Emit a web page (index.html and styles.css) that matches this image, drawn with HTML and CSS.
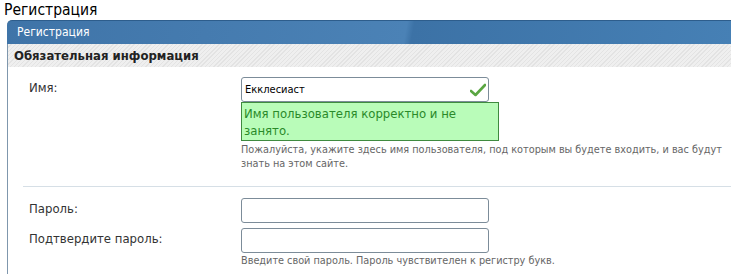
FILE: index.html
```html
<html>
<head>
<meta charset="utf-8">
<link rel="stylesheet" href="styles.css">
<title>Регистрация</title>
</head>
<body>
    <h2 class="pageTitle">Регистрация</h2>
    <div class="block">
        <div class="blockHead">Регистрация</div>
        <div class="subHead">Обязательная информация</div>
        <div class="blockBody">
            <div class="row">
                <div class="label">Имя:</div>
                <div class="field">
                    <div class="inputBox">
                        <span class="value">Екклесиаст</span>
                        <svg class="check" width="16" height="14" viewBox="0 0 16 14">
                            <path d="M1 8 L5.5 12 L15 2" fill="none" stroke="#5aa642" stroke-width="2.6" stroke-linecap="round" stroke-linejoin="round"/>
                        </svg>
                    </div>
                    <div class="okBox">Имя пользователя корректно и не занято.</div>
                    <p class="hint">Пожалуйста, укажите здесь имя пользователя, под которым вы будете входить, и вас будут знать на этом сайте.</p>
                </div>
            </div>
            <div class="divider"></div>
            <div class="row rowTight">
                <div class="label">Пароль:</div>
                <div class="field">
                    <div class="inputBox"></div>
                </div>
            </div>
            <div class="row">
                <div class="label">Подтвердите пароль:</div>
                <div class="field">
                    <div class="inputBox"></div>
                    <p class="hint hintLast">Введите свой пароль. Пароль чувствителен к регистру букв.</p>
                </div>
            </div>
        </div>
    </div>
</body>
</html>
```

FILE: styles.css
```css
body {margin: 0;
      background: white;
      font-family: "DejaVu Sans Condensed", "DejaVu Sans", sans-serif;
      font-size: 11px;
      color: #333}
.pageTitle {margin: 0;
            padding: 2px 0 0 4px;
            height: 18px;
            font-size: 15.5px;
            font-weight: normal;
            color: black;
            line-height: 17px}
.block {margin-left: 7px}
.blockHead {height: 23px;
            border-top: 1px solid #2d5d8c;
            border-top-left-radius: 5px;
            background: linear-gradient(100deg, #3f74a8 0%, #4b82b6 55%, #3c72a6 56%, #4680b5 100%);
            color: white;
            font-size: 12px;
            line-height: 22px;
            padding-left: 10px}
.subHead {height: 23px;
          line-height: 24px;
          padding-left: 6px;
          border-left: 1px solid #7f97ad;
          background: repeating-linear-gradient(135deg, #efefef 0px, #efefef 2px, #e3e3e3 2px, #e3e3e3 3px);
          color: #222;
          font-weight: bold;
          font-size: 13px}
.blockBody {border-left: 1px solid #7f97ad;
            padding: 10px 0 6px 0}
.row {display: flex}
.label {width: 212px;
        padding-left: 21px;
        padding-top: 3px;
        font-size: 13px;
        line-height: 15px;
        color: #333}
.field {width: 490px}
.inputBox {display: flex;
           align-items: center;
           justify-content: space-between;
           padding: 0 0 0 3px;
           box-sizing: border-box;
           width: 248px;
           height: 25px;
           border: 1px solid #7c8c99;
           border-radius: 3px}
.value {color: black;
        font-size: 11px}
.check {margin-right: 2px}
.okBox {width: 258px;
        box-sizing: border-box;
        background: #b9fcb9;
        border: 1px solid #3f8a3f;
        color: #2a8a2a;
        font-size: 13px;
        line-height: 17px;
        padding: 2px 2px 1px 2px}
.hint {margin: 2px 0 0 0;
       color: #666;
       font-size: 10.8px;
       line-height: 14px;
       width: 490px}
.hintLast {margin-top: 1px}
.divider {margin: 15px 0 11px 15px;
          border-top: 1px solid #d6dfe6}
.rowTight {margin-bottom: 5px}
```
